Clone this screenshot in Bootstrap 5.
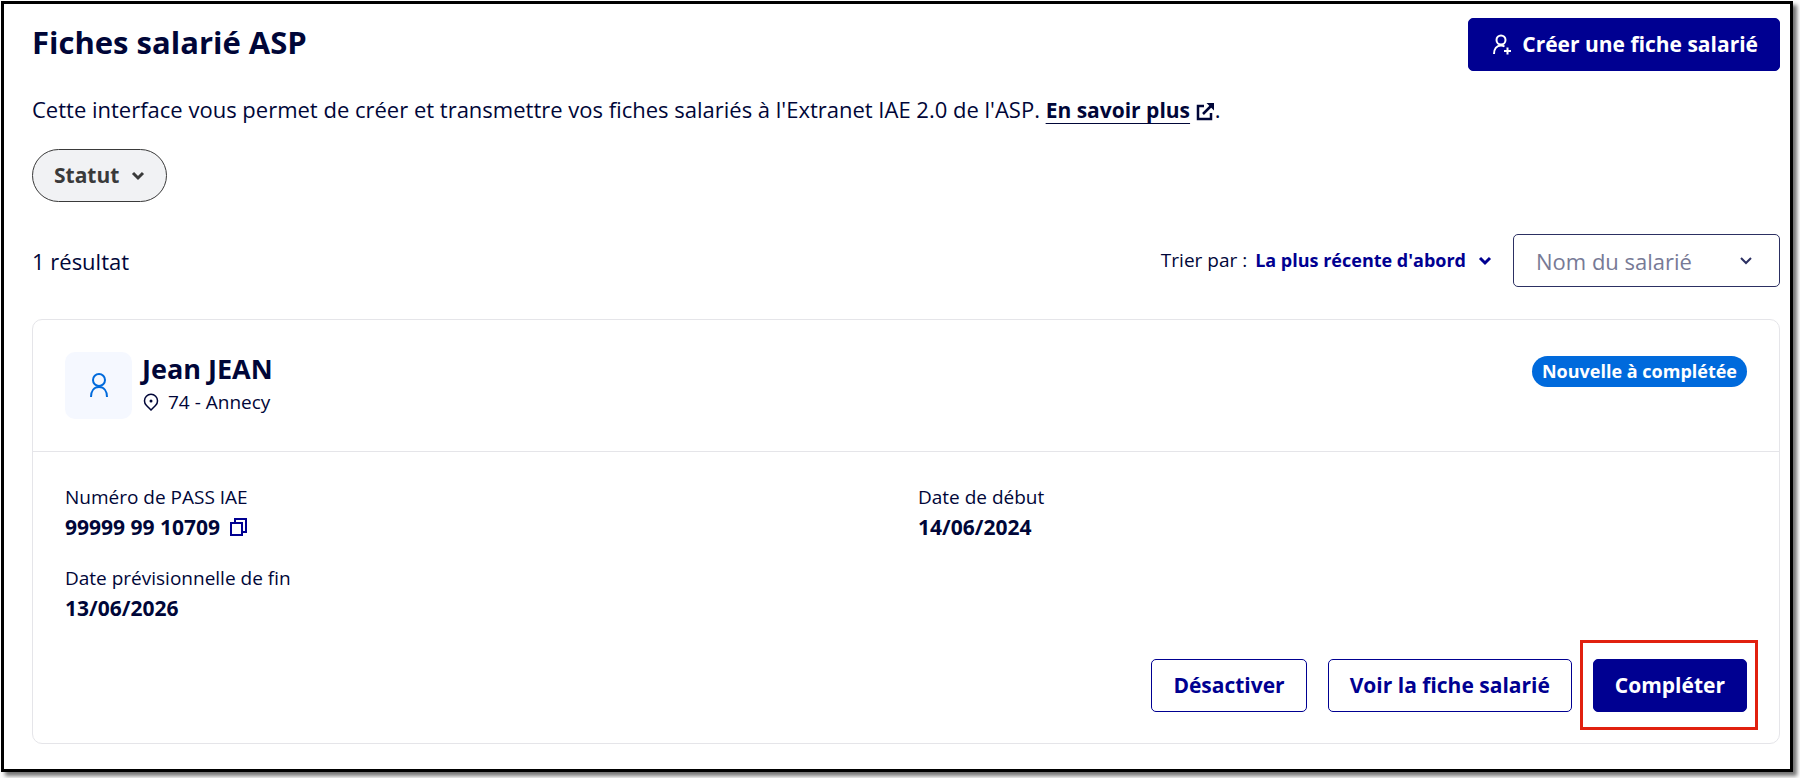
<!DOCTYPE html>
<html lang="fr">
<head>
<meta charset="utf-8">
<meta name="viewport" content="width=device-width, initial-scale=1">
<title>Fiches salarié ASP</title>
<link href="https://cdn.jsdelivr.net/npm/bootstrap@5.3.0/dist/css/bootstrap.min.css" rel="stylesheet">
<style>
  :root { --ink: #000638; --brand: #000091; --info: #006adc; }
  body { font-family: "Open Sans", "Noto Sans", sans-serif; font-size: 22px; line-height: 32px; color: var(--ink); background: #fff; }
  svg { flex: none; fill: none; stroke: currentColor; stroke-width: 2; }
  .page-frame { margin: 1px 7px 7px 1px; border: 3px solid #000; padding: 14px 10px 25px 28px; box-shadow: 4px 4px 4px rgba(0, 0, 0, .55); }
  .page-title { font-size: 31px; line-height: 48px; font-weight: 700; }
  .page-head { margin-bottom: 22px; }
  .intro { margin-bottom: 23px; }
  .filters, .result-bar { margin-bottom: 32px; }
  .btn { font-size: 21px; line-height: 31px; font-weight: 700; padding: 10px 21px; border-radius: 5px; }
  .btn-primary { --bs-btn-bg: var(--brand); --bs-btn-border-color: var(--brand); --bs-btn-hover-bg: #1212ff; }
  .btn-outline-primary { --bs-btn-color: var(--brand); --bs-btn-border-color: var(--brand); --bs-btn-hover-bg: var(--brand); }
  .btn-filter { color: #3a3a3a; background: #f1f2f4; border-color: #3a3a3a; border-radius: 27px; }
  .more-link { font-size: 21px; font-weight: 700; color: var(--ink); text-decoration-thickness: 1px; text-underline-offset: 5px; }
  .small-text { font-size: 19px; line-height: 27px; }
  .sort-btn { font-size: 18px; font-weight: 700; color: var(--brand); padding: 0; border: 0; }
  .chevron { margin-left: 12px; stroke-width: 3; }
  .name-select { width: 267px; height: 53px; margin-left: 21px; padding: 0 22px; font-size: 22px; line-height: 32px; color: #777a96; border-color: #2c3062; border-radius: 5px;
    background-image: url("data:image/svg+xml,%3Csvg xmlns='http://www.w3.org/2000/svg' viewBox='0 0 14 14' fill='none' stroke='%232c3062' stroke-width='2'%3E%3Cpath d='M2 4l5 5 5-5'/%3E%3C/svg%3E"); background-size: 14px; background-position: right 26px center; }
  .record { border: 1px solid #e5e5e9; border-radius: 10px; color: inherit; }
  .record-head { padding: 32px; border-bottom: 1px solid #e5e5e9; }
  .record-body { padding: 32px 32px 31px; }
  .avatar { width: 67px; height: 67px; margin-right: 10px; border-radius: 10px; background: #f5f8ff; color: var(--info); }
  .person-name { font-size: 27px; line-height: 34px; font-weight: 700; }
  .place { font-size: 19px; line-height: 32px; }
  .status { font-size: 18px; line-height: 31px; font-weight: 700; padding: 0 10px; margin-top: 4px; background: var(--info); }
  .field-value { font-size: 21px; line-height: 32px; font-weight: 700; }
  .fields { row-gap: 22px; margin-bottom: 35px; }
  .copy-btn { color: var(--brand); background: none; border: 0; padding: 0; margin-left: 10px; }
  .actions { gap: 21px; }
  .spotlight { position: relative; }
  .spotlight::after { content: ""; position: absolute; inset: -19px -11px -18px -13px; border: 3px solid #e1200f; pointer-events: none; }
</style>
</head>
<body>
<main class="page-frame">
  <header class="page-head d-flex justify-content-between align-items-start">
    <h1 class="page-title mb-0">Fiches salarié ASP</h1>
    <button type="button" class="btn btn-primary d-flex align-items-center">
      <svg class="me-2" width="24" height="24" viewBox="0 0 24 24"><circle cx="11" cy="7" r="4.500"/><path d="M4 21c0-5 2.500-8.500 7-8.500 1.500 0 2.500.4 3.500 1M17.500 14.500v7M14 18h7"/></svg>
      Créer une fiche salarié
    </button>
  </header>

  <p class="intro">Cette interface vous permet de créer et transmettre vos fiches salariés à l'Extranet IAE 2.0 de l'ASP. <a class="more-link" href="#">En savoir plus</a> <svg width="19" height="20" viewBox="0 0 19 20"><path stroke-width="2.500" d="M8 4H2v13h13v-6M7 12L15 4"/><path d="M10.500 1H18v7.500z" fill="currentColor" stroke="none"/></svg>.</p>

  <div class="filters d-flex">
    <button type="button" class="btn btn-filter d-flex align-items-center">Statut
      <svg class="chevron" width="14" height="14" viewBox="0 0 14 14"><path d="M2 4l5 5 5-5"/></svg>
    </button>
  </div>

  <div class="result-bar d-flex align-items-center">
    <p class="mb-0 me-auto">1 résultat</p>
    <span class="small-text me-2">Trier par :</span>
    <button type="button" class="btn sort-btn d-flex align-items-center">La plus récente d'abord
      <svg class="chevron" width="14" height="14" viewBox="0 0 14 14"><path d="M2 4l5 5 5-5"/></svg>
    </button>
    <select class="form-select name-select" aria-label="Nom du salarié"><option>Nom du salarié</option></select>
  </div>

  <article class="card record">
    <div class="record-head d-flex align-items-start">
      <div class="avatar d-flex align-items-center justify-content-center">
        <svg width="26" height="28" viewBox="0 0 26 28"><circle cx="13" cy="8" r="6"/><path d="M5 25c0-6 3-10 8-10s8 4 8 10"/></svg>
      </div>
      <div class="me-auto">
        <h2 class="person-name mb-0">Jean JEAN</h2>
        <div class="place d-flex align-items-center">
          <svg class="me-2" width="18" height="18" viewBox="0 0 18 18"><path stroke-width="1.500" d="M9 17L4.500 12.500a6.500 6.500 0 1 1 9 0z"/><circle cx="9" cy="8" r="1.500" fill="currentColor" stroke="none"/></svg>
          74 - Annecy
        </div>
      </div>
      <span class="badge rounded-pill status">Nouvelle à complétée</span>
    </div>
    <div class="record-body">
      <div class="row fields">
        <div class="col-6">
          <div class="small-text">Numéro de PASS IAE</div>
          <div class="field-value d-flex align-items-center">99999 99 10709
            <button type="button" class="copy-btn d-flex" aria-label="Copier"><svg width="18" height="20" viewBox="0 0 18 20"><path d="M1 6h11v12H1zM5 6V2h11v13h-4"/></svg></button>
          </div>
        </div>
        <div class="col-6">
          <div class="small-text">Date de début</div>
          <div class="field-value">14/06/2024</div>
        </div>
        <div class="col-6">
          <div class="small-text">Date prévisionnelle de fin</div>
          <div class="field-value">13/06/2026</div>
        </div>
      </div>
      <div class="actions d-flex justify-content-end">
        <button type="button" class="btn btn-outline-primary">Désactiver</button>
        <button type="button" class="btn btn-outline-primary">Voir la fiche salarié</button>
        <div class="spotlight"><button type="button" class="btn btn-primary">Compléter</button></div>
      </div>
    </div>
  </article>
</main>
<script src="https://cdn.jsdelivr.net/npm/bootstrap@5.3.0/dist/js/bootstrap.bundle.min.js"></script>
</body>
</html>
